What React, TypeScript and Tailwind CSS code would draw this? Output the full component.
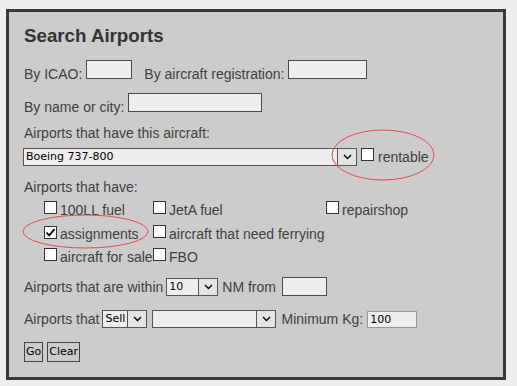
import * as React from 'react';

const Check = ({ checked = false }: { checked?: boolean }) => (
  <span className="inline-flex w-[13px] h-[13px] shrink-0 items-center justify-center border border-[#333] bg-white">
    {checked && (
      <svg width="11" height="11" viewBox="0 0 11 11">
        <path d="M1.5 5.5 L4.2 8.3 L9.5 2.2" fill="none" stroke="#000" strokeWidth="1.8" />
      </svg>
    )}
  </span>
);

const Select = ({ value, className }: { value: string; className: string }) => (
  <span className={`flex h-[18px] border border-[#555] bg-[#eeeeee] ${className}`}>
    <select
      defaultValue={value}
      className="min-w-0 flex-1 appearance-none bg-transparent pl-[2px] font-['DejaVu_Sans',sans-serif] text-[11px] leading-[16px] text-black outline-none"
    >
      <option>{value}</option>
    </select>
    <span className="flex w-[19px] items-center justify-center border-l border-[#555] bg-[#e4e4e4]">
      <svg width="9" height="6" viewBox="0 0 9 6">
        <path d="M1 1 L4.5 4.5 L8 1" fill="none" stroke="#000" strokeWidth="1.4" />
      </svg>
    </span>
  </span>
);

const TextInput = ({ className, value = '', light = false }: { className: string; value?: string; light?: boolean }) => (
  <input
    type="text"
    defaultValue={value}
    className={`border bg-[#eeeeee] px-[2px] font-['DejaVu_Sans',sans-serif] text-[11px] text-black outline-none ${
      light ? 'border-[#999]' : 'border-[#4a4a4a]'
    } ${className}`}
  />
);

const Option = ({ label, checked }: { label: string; checked?: boolean }) => (
  <div className="flex items-start whitespace-nowrap">
    <span className="mt-[2px]">
      <Check checked={checked} />
    </span>
    <span className="ml-[3px] mt-[3px]">{label}</span>
  </div>
);

export default function App() {
  return (
    <div className="relative h-[386px] w-[517px] bg-[#eeeeee] pl-[6px] pt-[9px] font-['Liberation_Sans',Arial,sans-serif] text-[14px] leading-[16px] text-[#404040]">
      <div className="flex h-[371px] w-[500px] flex-col border-[3px] border-[#383838] bg-[#cccccc] pl-[15px] pt-[13px]">
        <h3 className="text-[18.72px] font-bold leading-[22px] text-[#333]">Search Airports</h3>

        {/* ICAO / registration */}
        <div className="mt-[13px] flex h-[19px] items-start">
          <span className="mt-[6px]">By ICAO:</span>
          <TextInput className="ml-[4px] h-[19px] w-[46px]" />
          <span className="ml-[12px] mt-[6px]">By aircraft registration:</span>
          <TextInput className="ml-[4px] h-[19px] w-[79px]" />
        </div>

        <div className="mt-[14px] flex h-[19px] items-start">
          <span className="mt-[6px]">By name or city:</span>
          <TextInput className="ml-[4px] h-[19px] w-[134px]" />
        </div>

        <div className="mt-[13px] h-[16px]">Airports that have this aircraft:</div>
        <div className="mt-[7px] flex h-[18px] items-start">
          <Select value="Boeing 737-800" className="-ml-[1px] w-[334px]" />
          <span className="ml-[4px]">
            <Check />
          </span>
          <span className="ml-[4px] mt-[1px]">rentable</span>
        </div>

        <div className="mt-[13px] h-[16px]">Airports that have:</div>
        <div className="ml-[20px] mt-[4px] grid grid-cols-[109px_173px_auto] auto-rows-[23.5px]">
          <Option label="100LL fuel" />
          <Option label="JetA fuel" />
          <Option label="repairshop" />
          <Option label="assignments" checked />
          <Option label="aircraft that need ferrying" />
          <div />
          <Option label="aircraft for sale" />
          <Option label="FBO" />
        </div>

        <div className="mt-[7.5px] flex h-[19px] items-center">
          <span>Airports that are within</span>
          <Select value="10" className="ml-[3px] w-[52px]" />
          <span className="ml-[4px]">NM from</span>
          <TextInput className="ml-[6px] h-[19px] w-[45px]" />
        </div>

        <div className="mt-[14px] flex h-[18px] items-center">
          <span>Airports that</span>
          <Select value="Sell" className="ml-[3px] w-[45px]" />
          <Select value="" className="ml-[5px] w-[124px]" />
          <span className="ml-[5px]">Minimum Kg:</span>
          <TextInput value="100" light className="ml-[4px] h-[17px] w-[50px]" />
        </div>

        <div className="mt-[14px] flex">
          <button className="h-[20px] border border-[#444] px-[1px] font-['DejaVu_Sans',sans-serif] text-[11px] leading-[18px] text-black">
            Go
          </button>
          <button className="ml-[4px] h-[20px] border border-[#444] px-[1px] font-['DejaVu_Sans',sans-serif] text-[11px] leading-[18px] text-black">
            Clear
          </button>
        </div>
      </div>

      {/* red annotation rings */}
      <svg className="pointer-events-none absolute inset-0" width="517" height="386">
        <ellipse cx="383" cy="155" rx="51" ry="25" fill="none" stroke="#e5484d" strokeWidth="1" />
        <ellipse cx="85.5" cy="231.5" rx="62.5" ry="16.5" fill="none" stroke="#e5484d" strokeWidth="1" />
      </svg>
    </div>
  );
}
